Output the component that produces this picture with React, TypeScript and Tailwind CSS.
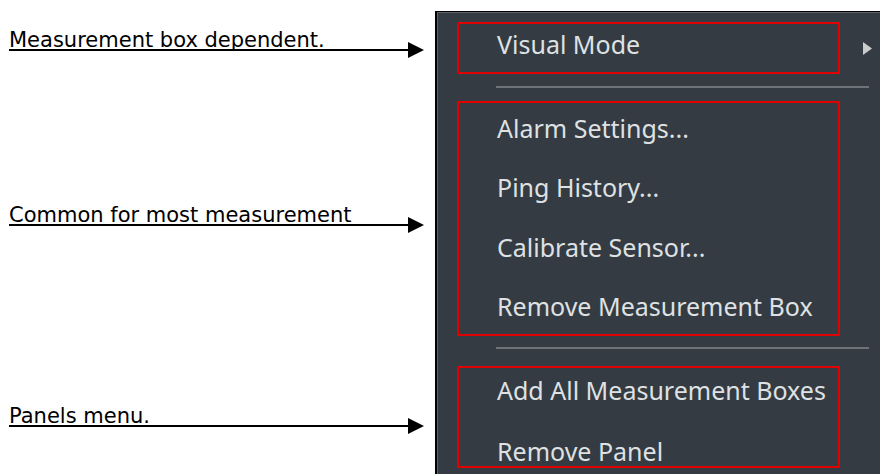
import React from 'react';

const menuFont = { fontFamily: '"Noto Sans", "Open Sans", sans-serif' };

function Note({ text, className }: { text: string; className: string }) {
  return (
    <div className={className}>
      <div className="pl-[9px] text-[21px] leading-[24px] text-black" style={{ fontFamily: '"DejaVu Sans", sans-serif' }}>
        {text}
      </div>
      <div className="-mt-[10px] flex items-center pl-[9px] h-[16px]">
        <div className="h-[2px] flex-1 bg-black" />
        <svg width="16" height="16" viewBox="0 0 16 16" className="shrink-0">
          <polygon points="0,0 16,8 0,16" fill="#000" />
        </svg>
      </div>
    </div>
  );
}

function Item({ label, h }: { label: string; h: string }) {
  return (
    <div className={`${h} flex items-center pl-[38px] text-[25px] text-[#dfe1e3] whitespace-nowrap`} style={menuFont}>
      {label}
    </div>
  );
}

export default function App() {
  return (
    <div className="flex h-[474px] w-[880px] overflow-hidden bg-white">
      {/* annotations */}
      <div className="w-[435px] shrink-0 pr-[11px]">
        <Note text="Measurement box dependent." className="mt-[28px]" />
        <Note text="Common for most measurement" className="mt-[145px]" />
        <Note text="Panels menu." className="mt-[171px]" />
      </div>

      {/* context menu */}
      <div className="mt-[11px] flex-1 border-l-2 border-t border-black bg-[#343b42]">
        <div className="h-full border-l border-t border-[#5b6268]">
          <div className="ml-[19px] mt-[9px] flex items-center">
            <div className="h-[52px] w-[383px] border-2 border-[#e00000]">
              <Item label="Visual Mode" h="h-[41px]" />
            </div>
            <svg width="9" height="13" viewBox="0 0 9 13" className="ml-[23px]">
              <polygon points="0,0 9,6.5 0,13" fill="#c9cbcd" />
            </svg>
          </div>

          <div className="ml-[58px] mt-[12px] h-[2px] w-[373px] bg-[#6d7378]" />

          <div className="ml-[19px] mt-[13px] h-[235px] w-[383px] border-2 border-[#e00000]">
            <div className="-mt-[4px]">
              <Item label="Alarm Settings..." h="h-[59.33px]" />
              <Item label="Ping History..." h="h-[59.33px]" />
              <Item label="Calibrate Sensor..." h="h-[59.33px]" />
              <Item label="Remove Measurement Box" h="h-[59.33px]" />
            </div>
          </div>

          <div className="ml-[58px] mt-[11px] h-[2px] w-[373px] bg-[#6d7378]" />

          <div className="ml-[19px] mt-[17px] h-[102px] w-[383px] border-2 border-[#e00000]">
            <div className="-mt-[8px]">
              <Item label="Add All Measurement Boxes" h="h-[61px]" />
              <Item label="Remove Panel" h="h-[61px]" />
            </div>
          </div>
        </div>
      </div>
    </div>
  );
}
